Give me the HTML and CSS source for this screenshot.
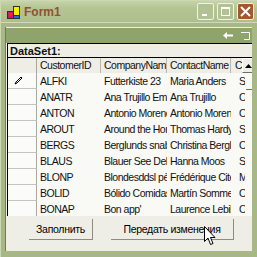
FILE: index.html
```html
<!DOCTYPE html>
<html>
<head>
<meta charset="utf-8">
<link rel="stylesheet" href="styles.css">
</head>
<body>
<div class="window">
  <div class="titlebar">
    <svg class="appicon" width="13" height="13" viewBox="0 0 13 13">
      <rect x="6.5" y="0.5" width="6" height="9" fill="#f4f000" stroke="#303020"/>
      <rect x="6.5" y="9.5" width="6" height="3" fill="#2a6ad8" stroke="#303020"/>
      <rect x="0.5" y="5.5" width="6" height="7" fill="#d0186a" stroke="#303020"/>
      <rect x="2" y="7" width="3" height="3" fill="#e83020"/>
    </svg>
    <span class="title">Form1</span>
    <div class="tbuttons">
      <div class="tbtn"><svg width="17" height="17" viewBox="0 0 17 17"><rect x="5" y="11" width="5" height="2" fill="#fff"/></svg></div>
      <div class="tbtn"><svg width="17" height="17" viewBox="0 0 17 17"><rect x="4.5" y="4.5" width="8" height="8" fill="none" stroke="#fff"/><rect x="4" y="4" width="9" height="2" fill="#fff"/></svg></div>
      <div class="tbtn close"><svg width="17" height="17" viewBox="0 0 17 17"><path d="M4 4 L13 13 M13 4 L4 13" stroke="#fff" stroke-width="2"/></svg></div>
    </div>
  </div>
  <div class="client">
    <div class="navbar">
      <svg width="10" height="7" viewBox="0 0 10 7"><path d="M0 3.5 L4 0 L4 2.5 L10 2.5 L10 4.5 L4 4.5 L4 7 Z" fill="#fff"/></svg>
      <svg class="fold" width="9" height="8" viewBox="0 0 9 8"><path d="M0 0.5 H8.5 V7.5 H3" stroke="#fff" fill="none"/></svg>
    </div>
    <div class="grid">
      <div class="caption">DataSet1:</div>
      <div class="row head">
        <div class="rh"></div>
        <div class="c">CustomerID</div>
        <div class="c">CompanyName</div>
        <div class="c">ContactName</div>
        <div class="c last">ContactTitle</div>
      </div>
      <div class="row"><div class="rh"><svg width="9" height="9" viewBox="0 0 9 9"><path d="M1 8 L2 6 L7 1 L8 2 L3 7 Z" fill="none" stroke="#000" stroke-width="1"/></svg></div><div class="c">ALFKI</div><div class="c">Futterkiste 23</div><div class="c">Maria Anders</div><div class="c last">Sales</div></div>
      <div class="row"><div class="rh"></div><div class="c">ANATR</div><div class="c">Ana Trujillo Emparedados</div><div class="c">Ana Trujillo</div><div class="c last">Owner</div></div>
      <div class="row"><div class="rh"></div><div class="c">ANTON</div><div class="c">Antonio Moreno</div><div class="c">Antonio Moreno</div><div class="c last">Owner</div></div>
      <div class="row"><div class="rh"></div><div class="c">AROUT</div><div class="c">Around the Horn</div><div class="c">Thomas Hardy</div><div class="c last">Sales</div></div>
      <div class="row"><div class="rh"></div><div class="c">BERGS</div><div class="c">Berglunds snabbköp</div><div class="c">Christina Berglund</div><div class="c last">Order</div></div>
      <div class="row"><div class="rh"></div><div class="c">BLAUS</div><div class="c">Blauer See Delikatessen</div><div class="c">Hanna Moos</div><div class="c last">Sales</div></div>
      <div class="row"><div class="rh"></div><div class="c">BLONP</div><div class="c">Blondesddsl père</div><div class="c">Frédérique Citeaux</div><div class="c last">Marketing</div></div>
      <div class="row"><div class="rh"></div><div class="c">BOLID</div><div class="c">Bólido Comidas</div><div class="c">Martín Sommer</div><div class="c last">Owner</div></div>
      <div class="row"><div class="rh"></div><div class="c">BONAP</div><div class="c">Bon app'</div><div class="c">Laurence Lebihan</div><div class="c last">Owner</div></div>
      <div class="scrollup"><svg width="7" height="4" viewBox="0 0 7 4"><path d="M0 4 L3.5 0 L7 4 Z" fill="#000"/></svg></div>
      <div class="scrollshadow"></div>
    </div>
    <div class="buttons">
      <div class="btn b1">Заполнить</div>
      <div class="btn b2">Передать изменения</div>
    </div>
    <svg class="cursor" width="12" height="20" viewBox="0 0 12 20"><path d="M0.5 0.5 L0.5 15.5 L4 12 L6.5 18.5 L9 17.5 L6.5 11.5 L11 11.5 Z" fill="#fff" stroke="#000"/></svg>
  </div>
</div>
</body>
</html>
```

FILE: styles.css
```css
html, body {
  margin: 0;
  padding: 0;
  width: 257px;
  height: 257px;
  overflow: hidden;
}
.window {
  width: 257px;
  height: 257px;
  box-sizing: border-box;
  background: #a7b886;
  border-left: 1px solid #cbd8b2;
  border-top: 1px solid #cbd8b2;
  display: flex;
  flex-direction: column;
  font-family: "Liberation Sans", Arial, sans-serif;
}
.titlebar {
  height: 21px;
  display: flex;
  align-items: center;
  background: linear-gradient(#c6d4a8, #b4c492 35%, #aebe8c);
  padding-left: 6px;
  border-bottom: 1px solid #cfdab8;
}
.appicon {
  margin-top: 1px;
}
.title {
  margin-left: 4px;
  font-weight: bold;
  font-size: 12px;
  color: #8f5234;
  flex: 1;
}
.tbuttons {
  display: flex;
  gap: 3px;
  margin-right: 3px;
}
.tbtn {
  width: 17px;
  height: 17px;
  box-sizing: border-box;
  border: 1px solid #f0f4e8;
  border-radius: 2px;
  background: #b2c294;
  display: flex;
}
.tbtn svg {
  margin: -1px;
}
.tbtn.close {
  background: #a4582f;
}
.client {
  position: relative;
  flex: 1;
  margin: 4px 5px 6px 4px;
  background: #efeee6;
  border-left: 1px solid #707a5c;
  overflow: hidden;
  display: flex;
  flex-direction: column;
}
.navbar {
  height: 15px;
  background: #8fa46c;
  display: flex;
  align-items: center;
  justify-content: flex-end;
  gap: 8px;
  padding-right: 2px;
  margin-top: 1px;
}
.fold {
  margin-top: 1px;
}
.grid {
  position: relative;
  width: 260px;
  height: 172px;
  border-top: 1px solid #000;
  border-left: 1px solid #000;
  margin-left: 1px;
  overflow: hidden;
  background: #f9f9f6;
  font-size: 10.5px;
  letter-spacing: -0.5px;
  color: #111;
}
.caption {
  height: 13px;
  background: #efeee6;
  border-bottom: 1px solid #000;
  font-weight: bold;
  font-size: 11px;
  letter-spacing: 0;
  padding-left: 2px;
  line-height: 14px;
}
.row {
  display: grid;
  grid-template-columns: 29px 64px 66px 64px 14px;
  height: 16px;
}
.row.head {
  height: 15px;
  background: #efeee6;
}
.c {
  white-space: nowrap;
  overflow: hidden;
  padding-left: 3px;
  line-height: 16px;
}
.c.last {
  padding-left: 8px;
}
.head .c {
  border-right: 1px solid #b8b8ae;
  line-height: 15px;
}
.head .c.last {
  padding-left: 4px;
  border-right: none;
}
.rh {
  background: #fbfbf9;
  border-right: 1px solid #a8a8a0;
  border-bottom: 1px solid #c4c4bc;
  display: flex;
  align-items: center;
  padding-left: 6px;
}
.head .rh {
  background: #efeee6;
  border-bottom: none;
}
.scrollup {
  position: absolute;
  left: 234px;
  top: 14px;
  width: 12px;
  height: 15px;
  box-sizing: border-box;
  border: 1px solid #fff;
  border-right-color: #6e6e66;
  border-bottom-color: #6e6e66;
  background: #efeee6;
  display: flex;
  align-items: center;
  justify-content: center;
}
.scrollshadow {
  position: absolute;
  left: 238px;
  top: 29px;
  width: 7px;
  height: 16px;
  border-right: 1px solid #6e6e66;
  border-bottom: 1px solid #6e6e66;
}
.buttons {
  display: flex;
  gap: 18px;
  padding-left: 23px;
  margin-top: 3px;
}
.btn {
  height: 21px;
  box-sizing: border-box;
  border-right: 1px solid #8e8c82;
  border-bottom: 1px solid #8e8c82;
  font-size: 10.5px;
  display: flex;
  align-items: center;
  justify-content: center;
  color: #000;
  letter-spacing: -0.3px;
}
.b1 { width: 64px; }
.b2 { width: 123px; }
.cursor {
  position: absolute;
  left: 198px;
  top: 199px;
}
```
